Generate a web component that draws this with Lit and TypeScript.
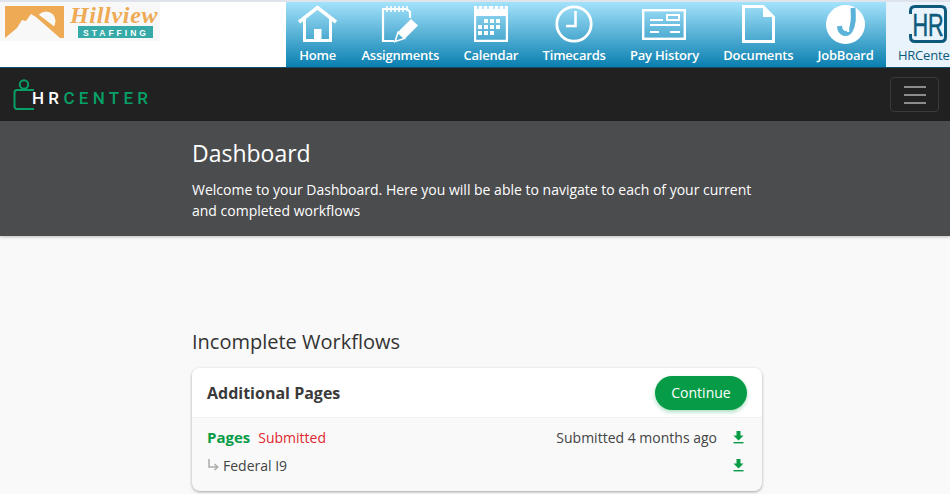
import { LitElement, html, css, svg } from "lit";
import { customElement } from "lit/decorators.js";

const icons: Record<string, unknown> = {
  home: svg`<svg class="ic" width="39" height="38" viewBox="0 0 39 38" fill="none" stroke="#fff" stroke-width="3"><path d="M1 17 L19.500 2.500 L38 17" stroke-width="3.500"/><path d="M6.500 14 V35.500 H32.500 V14"/><rect x="16" y="24" width="7.500" height="12" fill="#fff" stroke="none"/></svg>`,
  assign: svg`<svg class="ic" width="38" height="38" viewBox="0 0 38 38" fill="none" stroke="#fff" stroke-width="2.200"><path d="M13 36 H2 V4 H26 L29 7 V13"/><path d="M6 1 V7 M10 1 V7 M14 1 V7 M18 1 V7 M22 1 V7 M26 1 V6" stroke-width="1.600"/><path d="M17 27 L30 14 L37 20.500 L24 33.500 Z" fill="#fff" stroke="none"/><path d="M14 36.500 L17 27.500 L23.500 33.500 Z" stroke-width="1.600"/></svg>`,
  cal: svg`<svg class="ic" width="34" height="36" viewBox="0 0 34 36"><path fill-rule="evenodd" fill="#fff" d="M0 0 H34 V36 H0 Z M2.200 10 V33.800 H31.800 V10 Z"/><path d="M4 0 V3 M9 0 V3 M14 0 V3 M20 0 V3 M25 0 V3 M30 0 V3" stroke="#9adbf6" stroke-width="1.500"/><g fill="#fff"><rect x="10" y="13" width="4" height="4"/><rect x="16" y="13" width="4" height="4"/><rect x="22" y="13" width="4" height="4"/><rect x="4" y="19" width="4" height="4"/><rect x="10" y="19" width="4" height="4"/><rect x="16" y="19" width="4" height="4"/><rect x="22" y="19" width="4" height="4"/><rect x="4" y="25" width="4" height="4"/><rect x="10" y="25" width="4" height="4"/><rect x="16" y="25" width="4" height="4"/></g></svg>`,
  time: svg`<svg class="ic" width="38" height="38" viewBox="0 0 38 38" fill="none" stroke="#fff"><circle cx="19" cy="19" r="17.200" stroke-width="2.800"/><path d="M20.500 6 V21 H11" stroke-width="2.600"/></svg>`,
  pay: svg`<svg class="ic" width="44" height="31" viewBox="0 0 44 31" fill="none" stroke="#fff" stroke-width="2"><rect x="1.200" y="1.200" width="41.600" height="28.600" stroke-width="2.400"/><rect x="25" y="6" width="12" height="5"/><path d="M8 11 H21 M8 16 H38 M8 23 H17 M28 23 H38"/></svg>`,
  doc: svg`<svg class="ic" width="33" height="38" viewBox="0 0 33 38" fill="none" stroke="#fff" stroke-width="3"><path d="M1.500 1.500 H21 L31.500 12 V36.500 H1.500 Z"/><path d="M21 2 L31 12 H21 Z" fill="#fff" stroke="none"/></svg>`,
  job: svg`<svg class="ic" width="39" height="39" viewBox="0 0 39 39" fill="none"><circle cx="19.500" cy="19.500" r="19.500" fill="#fff"/><path d="M27 3 C27.500 12 28 20 24 26 C20.500 30.500 14 29 13.500 21" stroke="#5cb3da" stroke-width="5"/><path d="M22 16 V27" stroke="#fff" stroke-width="2.500"/></svg>`,
  hr: svg`<svg class="ic hrc" width="38" height="38" viewBox="0 0 38 38" fill="none"><path d="M1.500 9 V6 Q1.500 1.500 6 1.500 H32 Q36.500 1.500 36.500 6 V32 Q36.500 36.500 32 36.500 H6 Q1.500 36.500 1.500 32 V29" stroke="#0e5a7c" stroke-width="3"/><text x="3.500" y="31" font-family="Liberation Sans, sans-serif" font-size="32" textLength="31" lengthAdjust="spacingAndGlyphs" fill="#0e5a7c" stroke="#0e5a7c" stroke-width=".5" paint-order="stroke">HR</text></svg>`,
};

const items: [string, string][] = [
  ["home", "Home"],
  ["assign", "Assignments"],
  ["cal", "Calendar"],
  ["time", "Timecards"],
  ["pay", "Pay History"],
  ["doc", "Documents"],
  ["job", "JobBoard"],
];

const download = svg`<svg class="dl" width="11" height="13" viewBox="0 0 11 13"><path d="M3.500 0 H7.500 V4.500 H10.500 L5.500 9.500 L0.500 4.500 H3.500 Z" fill="#069c47"/><rect x="0.500" y="11" width="10" height="1.400" fill="#069c47"/></svg>`;

@customElement("app-root")
export class AppRoot extends LitElement {
  static styles = css`
    :host { display: block; width: 950px; height: 494px; overflow: hidden; background: #f9f9f9; font-family: "Open Sans", sans-serif; color: #333; }
    .top { display: flex; height: 65px; border-top: 2px solid #dfe4ec; background: #fff; }
    .brand { width: 286px; flex: none; }
    .hv { display: flex; align-items: center; width: 160px; height: 39px; background: #f8f8f8; }
    .nav { flex: 1; display: flex; min-width: 0; overflow: hidden; background: linear-gradient(#a4e2fb, #0a80b0); }
    .item { flex: none; display: flex; flex-direction: column; align-items: center; padding: 0 12.15px; height: 65px; color: #fff; font: 600 13px/1 "Open Sans", sans-serif; letter-spacing: -0.2px; white-space: nowrap; }
    .ic-box { height: 44px; display: flex; align-items: center; justify-content: center; }
    .hrc { margin-left: 4px; }
    .label { margin-top: 3px; }
    .item.active { background: #e8f3fb; color: #0e5a7c; font-weight: 400; flex: 1 0 auto; align-items: center; }
    .bar { height: 54px; display: flex; justify-content: space-between; align-items: center; background: #212121; padding: 0 11px 0 13px; border-top: 1px solid #10506c; box-sizing: border-box; }
    .logo { display: flex; align-items: center; }
    .lt { font: 500 17px/1 Roboto, sans-serif; letter-spacing: 4.3px; color: #06a066; margin-left: -3px; margin-top: 7px; }
    .lt b { font-weight: 500; color: #fff; }
    .burger { width: 49px; height: 35px; border: 1px solid #3a3a3a; border-radius: 4px; box-sizing: border-box; display: flex; flex-direction: column; justify-content: center; align-items: center; gap: 6px; }
    .burger i { display: block; width: 22px; height: 2px; background: #8c8c8c; }
    .hero { height: 115px; background: #4b4c4e; box-shadow: 0 1px 3px rgba(0,0,0,.25); padding: 17px 0 0 192px; box-sizing: border-box; color: #fff; }
    h1 { margin: 0; font: 400 23px/31px "Open Sans", sans-serif; }
    .hero p { margin: 11px 0 0; font: 400 14px/20.6px "Open Sans", sans-serif; width: 570px; }
    main { padding: 92px 188px 0 192px; }
    h2 { margin: 0 0 13px; font: 400 20px/27px "Open Sans", sans-serif; color: #333; }
    .card { border-radius: 8px; background: #f9f9f9; box-shadow: 0 1px 3px rgba(0,0,0,.35); overflow: hidden; }
    .head { height: 50px; box-sizing: border-box; display: flex; justify-content: space-between; align-items: center; background: #fff; padding: 0 15px; border-bottom: 1px solid #f1f1f1; }
    .head strong { font: 700 16px "Open Sans", sans-serif; color: #3a3a3a; }
    .btn { width: 92px; height: 34px; border-radius: 17px; background: #069c47; color: #fff; font: 400 14px/34px "Open Sans", sans-serif; text-align: center; box-shadow: 0 2px 4px rgba(6,156,71,.35); }
    .rows { padding: 5px 18px 12px 15px; font-size: 14px; }
    .row { display: flex; justify-content: space-between; align-items: center; height: 28px; }
    .l, .r { display: flex; align-items: center; }
    .pages { color: #069c47; font-weight: 700; font-size: 15px; }
    .sub { color: #e0282e; margin-left: 8px; }
    .when { color: #444; margin-right: 16px; }
    .dl { display: block; }
    .arrow { display: block; margin: 0 4px 0 1px; }
    .fed { color: #444; }
  `;

  render() {
    return html`
      <div class="top">
        <div class="brand">
          <div class="hv">
            <svg width="160" height="39" viewBox="0 0 160 39">
              <rect x="5" y="4" width="59" height="32" fill="#eeaa54"/>
              <circle cx="46" cy="19" r="9.500" fill="#f8f8f8"/>
              <path d="M30 6 L64 32 V36 H30 Z" fill="#eeaa54"/>
              <path d="M5 36 L17 26 L22 18 L26 19 L31 12 L36 15 L60 36 Z" fill="#f8f8f8"/>
              <text x="70" y="21" font-family="Liberation Serif, serif" font-style="italic" font-weight="700" font-size="24" letter-spacing=".7" fill="#eeaa54">Hillview</text>
              <rect x="78" y="24" width="75" height="12" fill="#36aaa8"/>
              <text x="116" y="33.500" font-family="Liberation Sans, sans-serif" font-weight="700" font-size="8.500" letter-spacing="3" text-anchor="middle" fill="#fff">STAFFING</text>
            </svg>
          </div>
        </div>
        <div class="nav">
          ${items.map(([k, l]) => html`<div class="item"><div class="ic-box">${icons[k]}</div><div class="label">${l}</div></div>`)}
          <div class="item active"><div class="ic-box">${icons.hr}</div><div class="label">HRCenter</div></div>
        </div>
      </div>
      <div class="bar">
        <div class="logo">
          <svg width="22" height="31" viewBox="0 0 22 31" fill="none" stroke="#06a066" stroke-width="2"><circle cx="11" cy="5.500" r="4.200"/><path d="M21 11 H4 Q1.500 11 1.500 13.500 V27 Q1.500 30 4 30 H21"/></svg>
          <span class="lt"><b>HR</b>CENTER</span>
        </div>
        <div class="burger"><i></i><i></i><i></i></div>
      </div>
      <div class="hero">
        <h1>Dashboard</h1>
        <p>Welcome to your Dashboard. Here you will be able to navigate to each of your current and completed workflows</p>
      </div>
      <main>
        <h2>Incomplete Workflows</h2>
        <div class="card">
          <div class="head"><strong>Additional Pages</strong><div class="btn">Continue</div></div>
          <div class="rows">
            <div class="row"><div class="l"><span class="pages">Pages</span><span class="sub">Submitted</span></div><div class="r"><span class="when">Submitted 4 months ago</span>${download}</div></div>
            <div class="row"><div class="l"><svg class="arrow" width="11" height="12" viewBox="0 0 11 12" fill="none" stroke="#aaa" stroke-width="1.500"><path d="M1 0 V8 H9"/><path d="M6.500 5 L9.800 8 L6.500 11"/></svg><span class="fed">Federal I9</span></div><div class="r">${download}</div></div>
          </div>
        </div>
      </main>
    `;
  }
}
